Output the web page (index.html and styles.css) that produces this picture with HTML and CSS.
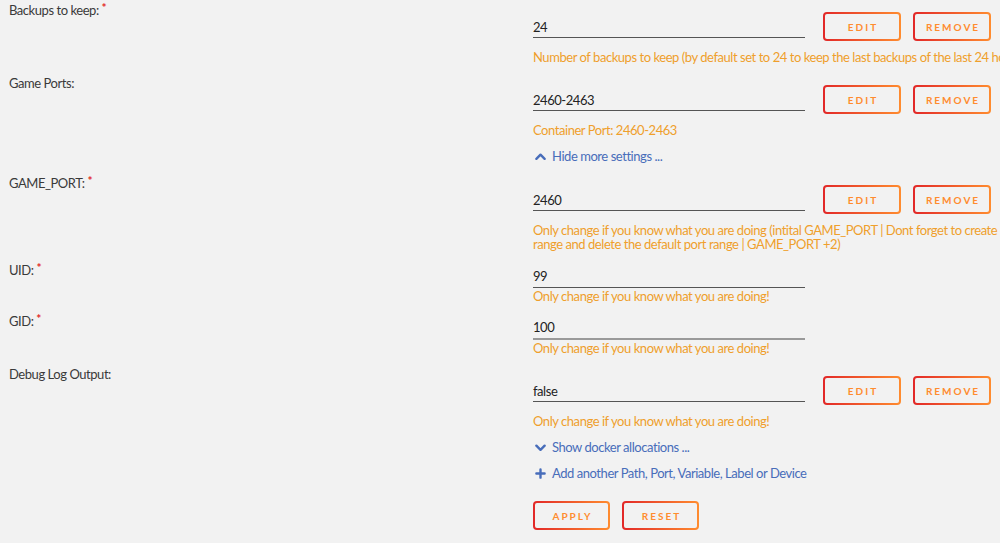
FILE: index.html
```html
<!DOCTYPE html>
<html>
<head>
<meta charset="utf-8">
<link rel="stylesheet" href="styles.css">
</head>
<body>
<div class="page">
  <div class="row">
    <div class="label">Backups to keep: <span class="req">*</span></div>
    <div class="content">
      <div class="field with-btns">
        <div class="input">24</div>
        <div class="btns"><button class="btn">EDIT</button><button class="btn">REMOVE</button></div>
      </div>
      <div class="desc">Number of backups to keep (by default set to 24 to keep the last backups of the last 24 hours)</div>
    </div>
  </div>

  <div class="row">
    <div class="label">Game Ports:</div>
    <div class="content">
      <div class="field with-btns">
        <div class="input">2460-2463</div>
        <div class="btns"><button class="btn">EDIT</button><button class="btn">REMOVE</button></div>
      </div>
      <div class="desc">Container Port: 2460-2463</div>
      <div class="link">
        <svg class="ico" viewBox="0 0 12 12"><path d="M1.5 8.5 L6 4 L10.5 8.5" fill="none" stroke="currentColor" stroke-width="2.6" stroke-linecap="round" stroke-linejoin="round"/></svg>
        <span>Hide more settings ...</span>
      </div>
    </div>
  </div>

  <div class="row">
    <div class="label">GAME_PORT: <span class="req">*</span></div>
    <div class="content">
      <div class="field with-btns">
        <div class="input">2460</div>
        <div class="btns"><button class="btn">EDIT</button><button class="btn">REMOVE</button></div>
      </div>
      <div class="desc">Only change if you know what you are doing (intital GAME_PORT | Dont forget to create own port<br>range and delete the default port range | GAME_PORT +2)</div>
    </div>
  </div>

  <div class="row row-plain">
    <div class="label">UID: <span class="req">*</span></div>
    <div class="content">
      <div class="field">
        <div class="input">99</div>
      </div>
      <div class="desc tight">Only change if you know what you are doing!</div>
    </div>
  </div>

  <div class="row">
    <div class="label">GID: <span class="req">*</span></div>
    <div class="content">
      <div class="field">
        <div class="input hover">100</div>
      </div>
      <div class="desc tight">Only change if you know what you are doing!</div>
    </div>
  </div>

  <div class="row">
    <div class="label">Debug Log Output:</div>
    <div class="content">
      <div class="field with-btns">
        <div class="input">false</div>
        <div class="btns"><button class="btn">EDIT</button><button class="btn">REMOVE</button></div>
      </div>
      <div class="desc">Only change if you know what you are doing!</div>
      <div class="link">
        <svg class="ico" viewBox="0 0 12 12"><path d="M1.5 4 L6 8.5 L10.5 4" fill="none" stroke="currentColor" stroke-width="2.6" stroke-linecap="round" stroke-linejoin="round"/></svg>
        <span>Show docker allocations ...</span>
      </div>
      <div class="link">
        <svg class="ico" viewBox="0 0 12 12"><path d="M6 1.5 V10.5 M1.5 6 H10.5" fill="none" stroke="currentColor" stroke-width="2.6" stroke-linecap="round"/></svg>
        <span>Add another Path, Port, Variable, Label or Device</span>
      </div>
      <div class="actions"><button class="btn">APPLY</button><button class="btn">RESET</button></div>
    </div>
  </div>
</div>
</body>
</html>
```

FILE: styles.css
```css
html, body {
  margin: 0;
  padding: 0;
  background: #f2f2f2;
  overflow: hidden;
}
body {
  font-family: Lato, "Liberation Sans", sans-serif;
  font-size: 13px;
  line-height: 16px;
  letter-spacing: -0.45px;
  color: #333;
}
.page {
  width: 1300px;
  padding: 2px 0 0 9px;
}
.row {
  display: grid;
  grid-template-columns: 524px 1fr;
  margin-bottom: 11px;
}
.row-plain {
  margin-bottom: 10px;
}
.label {
  color: #3a3a3a;
}
.req {
  color: #e22828;
  font-size: 12px;
  font-weight: bold;
  vertical-align: top;
  line-height: 12px;
}
.content {
  display: flex;
  flex-direction: column;
  align-items: flex-start;
}
.field {
  display: flex;
  align-items: flex-start;
  padding-top: 6px;
}
.field.with-btns {
  padding-top: 10px;
}
.with-btns .input {
  margin-top: 7px;
  padding-bottom: 2px;
}
.input {
  width: 272px;
  color: #222;
  padding-bottom: 3px;
  border-bottom: 1px solid #555;
}
.input.hover {
  border-bottom: 2px solid #9a9a9a;
}
.btns {
  display: flex;
  gap: 12px;
  margin-left: 18px;
}
.btn {
  box-sizing: border-box;
  height: 29px;
  width: 78px;
  padding: 0;
  border: 2px solid transparent;
  border-radius: 4px;
  background: linear-gradient(#f2f2f2, #f2f2f2) padding-box,
              linear-gradient(90deg, #e22828, #ff8c2f) border-box;
  color: #ff8c2f;
  font-family: Lato, "Liberation Sans", sans-serif;
  font-weight: bold;
  font-size: 10px;
  letter-spacing: 2px;
  text-align: center;
  text-indent: 2px;
}
.desc {
  color: #ef9f2c;
  line-height: 14px;
  white-space: nowrap;
  margin-top: 9px;
}
.desc.tight {
  margin-top: 1px;
}
.link {
  display: flex;
  align-items: center;
  gap: 6px;
  color: #486dba;
  margin-top: 11px;
  margin-left: 2px;
}
.link + .link {
  margin-top: 10px;
}
.ico {
  width: 11px;
  height: 11px;
}
.actions {
  display: flex;
  gap: 12px;
  margin-top: 20px;
}
.actions .btn {
  width: 77px;
}
```
